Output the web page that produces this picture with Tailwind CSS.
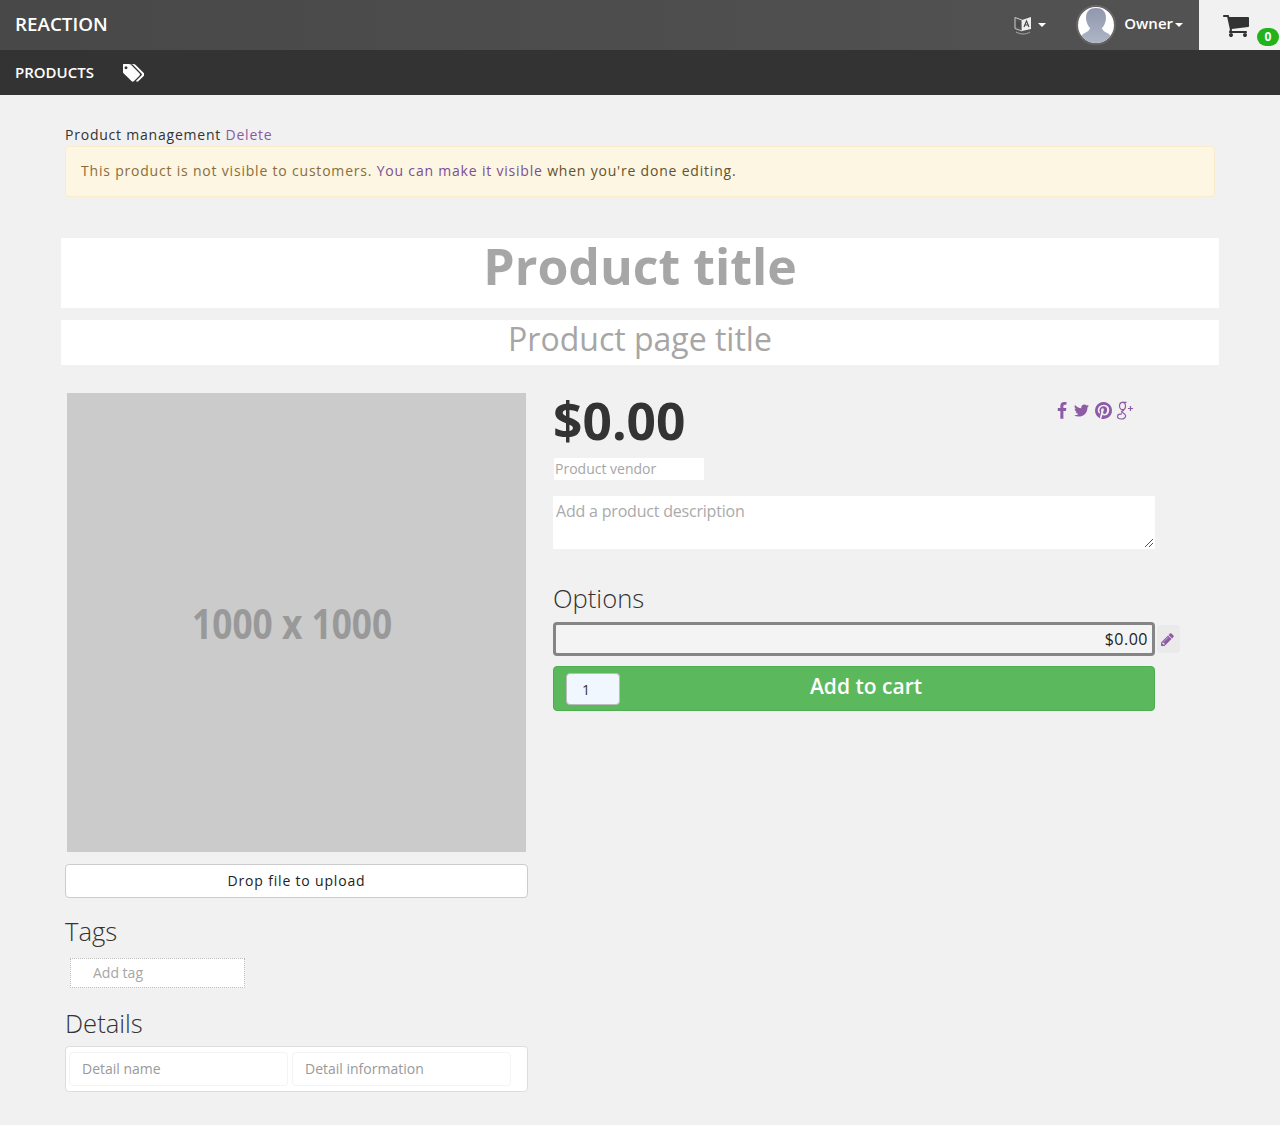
<!DOCTYPE html>
<html>
<head>
<meta charset="utf-8">
<script src="https://cdn.jsdelivr.net/npm/@tailwindcss/browser@4"></script>
</head>
<body class="bg-[#f1f1f1] font-['Open_Sans',sans-serif] text-[#333] h-[1125px] overflow-hidden">
<!-- top bar -->
<header class="h-[50px] flex items-center bg-gradient-to-r from-[#484848] to-[#535353] text-white">
  <div class="pl-[15px] pb-[2px] text-[18.800px] font-semibold leading-none">REACTION</div>
  <div class="ml-auto flex items-center h-full">
    <svg class="w-[18px] h-[20px] mr-[6px]" viewBox="0 0 18 20"><path d="M1 2.500l7 2.500v11l-7-2.500z" fill="none" stroke="#ccc"/><path d="M8 5l9-3v12l-9 2z" fill="#eee"/><path d="M2 17c3 1.500 5 2 7 2s5-.5 7-2" fill="none" stroke="#aaa"/><path d="M3 7l3 5M6 7l-3 4M10 12l2.500-6 2.500 6M11 10h3" fill="none" stroke="#444" stroke-width="1.100"/></svg>
    <span class="w-0 h-0 border-x-[4px] border-x-transparent border-t-[4px] border-t-white"></span>
    <div class="ml-[30px] w-[40px] h-[40px] rounded-full border-[2px] border-[#666] bg-white overflow-hidden">
      <svg viewBox="0 0 36 36" class="w-full h-full"><defs><linearGradient id="sil" x1="0" y1="0" x2="0" y2="1"><stop offset="0" stop-color="#8f98ae"/><stop offset="1" stop-color="#aeb5c6"/></linearGradient></defs><path d="M18 1c6 0 10 3 10 10 0 4-2 8-4 10 0 2 3 4 5 5 3 1 4 3 5 10H2c1-7 2-9 5-10 2-1 5-3 5-5-2-2-4-6-4-10C8 4 12 1 18 1z" fill="url(#sil)"/></svg>
    </div>
    <div class="ml-[8px] pb-[3px] text-[15px] font-semibold">Owner</div>
    <span class="ml-[2px] w-0 h-0 border-x-[4px] border-x-transparent border-t-[4px] border-t-white"></span>
    <div class="relative ml-[16px] w-[81px] h-full bg-[#f1f1f1]">
      <svg class="absolute left-[23px] top-[13px] w-[28px] h-[24px]" viewBox="0 128 1792 1536" preserveAspectRatio="none"><path fill="#333" d="M704 1536q0 52-38 90t-90 38-90-38-38-90 38-90 90-38 90 38 38 90zm896 0q0 52-38 90t-90 38-90-38-38-90 38-90 90-38 90 38 38 90zm128-1088v512q0 24-16.500 42.500t-40.500 21.500l-1044 122q13 60 13 70 0 16-24 64h920q26 0 45 19t19 45-19 45-45 19h-1024q-26 0-45-19t-19-45q0-11 8-31.500t16-36 21.500-40 15.500-29.500l-177-823h-204q-26 0-45-19t-19-45 19-45 45-19h256q16 0 28.500 6.500t19.500 15.500 13 24.500 8 26 5.500 29.500 4.500 26h1201q26 0 45 19t19 45z"/></svg>
      <span class="absolute left-[58px] top-[28px] w-[22px] h-[18px] rounded-full bg-[#22b21a] text-white text-[12px] font-bold leading-[18px] text-center">0</span>
    </div>
  </div>
</header>
<!-- sub nav -->
<nav class="h-[45px] bg-[#333] flex items-center text-white pl-[15px]">
  <span class="text-[15px] font-semibold">PRODUCTS</span>
  <svg class="ml-[29px] w-[21px] h-[18px]" viewBox="0 128 1792 1536"><path fill="#fff" d="M384 448q0-53-37.500-90.500t-90.500-37.500-90.500 37.500-37.500 90.500 37.500 90.500 90.500 37.500 90.500-37.500 37.500-90.500zm1067 576q0 53-37 90l-491 492q-39 37-91 37-53 0-90-37l-715-716q-38-37-64.500-101t-26.500-117v-416q0-52 38-90t90-38h416q53 0 117 26.500t102 64.500l715 714q37 39 37 91zm384 0q0 53-37 90l-491 492q-39 37-91 37-36 0-59-14t-53-45l470-470q37-37 37-90 0-52-37-91l-715-714q-38-38-102-64.500t-117-26.500h224q53 0 117 26.500t102 64.500l715 714q37 39 37 91z"/></svg>
</nav>
<main class="px-[61px]">
  <div class="px-[4px] pt-[30px] text-[14px] tracking-[0.78px] leading-[20px]">
    Product management <a class="text-[#8a5a9e]">Delete</a>
  </div>
  <div class="mx-[4px] mt-px h-[51px] px-[15px] pb-[2px] flex items-center rounded-[4px] border border-[#faebcc] bg-[#fcf6e2] text-[#8a6d3b] text-[14px] tracking-[0.8px]">
    <span>This product is not visible to customers. <a class="text-[#7d4e96]">You can make it visible</a> <span class="text-[#66512c]">when you're done editing.</span></span>
  </div>
  <h1 class="mt-[41px] h-[70px] bg-white text-center text-[50px] font-bold text-[#a6a6a6] leading-[56px]">Product title</h1>
  <h2 class="mt-[12px] h-[45px] bg-white text-center text-[32px] text-[#a6a6a6] leading-[38px]">Product page title</h2>
  <div class="mt-[28px] flex">
    <!-- left column -->
    <div class="ml-[4px] w-[463px]">
      <div class="ml-[2px] w-[459px] h-[459px] bg-[#cbcbcb] flex items-center justify-center pr-[9px] text-[#999] text-[42px] font-bold">
        <span class="scale-x-[.84] whitespace-nowrap">1000 x 1000</span>
      </div>
      <div class="mt-[12px] h-[34px] pb-[2px] bg-white border border-[#ccc] rounded-[4px] flex items-center justify-center text-[14px] tracking-[0.82px] text-[#222]">Drop file to upload</div>
      <h3 class="mt-[17px] text-[25.600px] leading-[33px] font-light">Tags</h3>
      <div class="mt-[10px] ml-[5px] w-[175px] h-[30px] pb-[2px] bg-white border border-dotted border-[#bbb] flex items-center pl-[22px] text-[14px] text-[#a6a6a6]">Add tag</div>
      <h3 class="mt-[19px] text-[25.600px] leading-[33px] font-light">Details</h3>
      <div class="mt-[6px] h-[46px] bg-white border border-[#ddd] rounded-[4px] flex items-center pl-[3px] gap-[4px]">
        <div class="w-[219px] h-[34px] pb-[2px] border border-[#f4f4f4] rounded-[4px] flex items-center pl-[12px] text-[14px] text-[#999]">Detail name</div>
        <div class="w-[219px] h-[34px] pb-[2px] border border-[#f4f4f4] rounded-[4px] flex items-center pl-[12px] text-[14px] text-[#999]">Detail information</div>
      </div>
    </div>
    <!-- right column -->
    <div class="ml-[25px] w-[627px]">
      <div class="flex items-start h-[65px]">
        <div class="text-[51.500px] font-bold leading-[54px]">$0.00</div>
        <div class="ml-auto mr-[46px] mt-[8px] flex items-center gap-[5px] text-[#8e5ba6]">
          <svg class="w-[12px] h-[18px]" viewBox="450 0 900 1792" fill="currentColor"><path d="M1343 12v264h-157q-86 0-116 36t-30 108v189h293l-39 296h-254v759h-306v-759h-255v-296h255v-218q0-186 104-288.500t277-102.500q147 0 228 12z"/></svg>
          <svg class="w-[17px] h-[17px]" viewBox="0 0 1792 1792" fill="currentColor"><path d="M1684 408q-67 98-162 167 1 14 1 42 0 130-38 259.500t-115.500 248.500-184.500 210.500-258 146-323 54.500q-271 0-496-145 35 4 76 4 225 0 401-138-105-2-188-64.500t-114-159.500q33 5 61 5 43 0 85-11-112-23-185.500-111.500t-73.500-205.500v-4q68 38 146 41-66-44-105-115t-39-154q0-88 44-163 121 149 294.500 238.500t371.500 99.500q-8-38-8-74 0-134 94.500-228.500t228.500-94.500q140 0 236 102 109-21 205-78-37 115-142 178 93-10 186-50z"/></svg>
          <svg class="w-[17px] h-[17px]" viewBox="128 128 1536 1536" fill="currentColor"><path d="M1664 896q0 209-103 385.500t-279.500 279.500-385.500 103q-111 0-218-32 59-93 78-164 9-34 54-211 20 39 73 67.500t114 28.500q121 0 216-68.500t147-188.500 52-270q0-114-59.500-214t-172.500-163-255-63q-105 0-196 29t-154.500 77-109 110.500-67 129.500-21.500 134q0 104 40 183t117 111q30 12 38-20 2-7 8-31t8-30q6-23-11-43-51-61-51-151 0-151 104.500-259.500t273.500-108.500q151 0 235.500 82t84.500 213q0 170-68.500 289t-175.500 119q-61 0-98-43.500t-23-104.500q8-35 26.500-93.500t30-103 11.500-75.500q0-50-27-83t-77-33q-62 0-105 57t-43 142q0 73 25 122l-99 418q-17 70-13 177-206-91-333-281t-127-423q0-209 103-385.500t279.500-279.500 385.500-103 385.500 103 279.500 279.500 103 385.500z"/></svg>
          <svg class="w-[17px] h-[19px]" viewBox="0 0 17 19" fill="none" stroke="currentColor" stroke-width="1.200"><ellipse cx="5.500" cy="5" rx="3" ry="3.700"/><path d="M5 1.300h4.500M7 9c-1 1-2 .8-2.500 1.500-.5.700 3.500 2 4 3.800.5 2.200-1.500 3.700-4 3.700-2.700 0-4-1.200-4-2.500 0-1.800 2-2.600 4.500-2.600"/><path d="M11 7.500h5M13.500 5v5"/></svg>
        </div>
      </div>
      <div class="ml-[1px] w-[150px] h-[22px] pb-[2px] bg-white flex items-center pl-px text-[14px] font-medium text-[#a6a6a6]">Product vendor</div>
      <div class="relative mt-[16px] w-[602px] h-[53px] bg-white border border-dotted border-white px-[2px] pt-[2px] text-[16px] tracking-[-0.2px] leading-[24px] text-[#aaa]">Add a product description
        <svg class="absolute right-[1px] bottom-[1px] w-[8px] h-[8px]" viewBox="0 0 8 8" stroke="#555" fill="none"><path d="M0 8L8 0M4 8l4-4"/></svg>
      </div>
      <h3 class="mt-[33px] text-[25.600px] leading-[33px] font-light">Options</h3>
      <div class="mt-[7px] flex items-center">
        <div class="w-[602px] h-[34px] border-[3px] border-[#858585] rounded-[4px] bg-[#f4f4f4] flex items-center justify-end pr-[4px] text-[16px] tracking-[0.5px] text-[#222]">$0.00</div>
        <div class="ml-[2px] w-[23px] h-[28px] rounded-[4px] bg-[#eaeaea] flex items-center justify-center pr-[2px]">
          <svg class="w-[15px] h-[15px]" viewBox="0 0 1792 1792" fill="#8e5ba6"><path d="M491 1536l91-91-235-235-91 91v107h128v128h107zm523-928q0-22-22-22-10 0-17 7l-542 542q-7 7-7 17 0 22 22 22 10 0 17-7l542-542q7-7 7-17zm-54-192l416 416-832 832h-416v-416zm683 96q0 53-37 90l-166 166-416-416 166-165q36-38 90-38 53 0 91 38l235 234q37 39 37 91z"/></svg>
        </div>
      </div>
      <div class="mt-[10px] w-[602px] h-[45px] rounded-[4px] bg-[#5cb85c] border border-[#4cae4c] flex items-center pl-[12px]">
        <div class="w-[54px] h-[32px] pt-px bg-[#f0f7ff] border border-[#bbb] rounded-[4px] flex items-center pl-[15px] text-[14px] text-[#333]">1</div>
        <div class="flex-1 text-center pr-[42px] pb-[3px] text-white text-[21px] font-semibold">Add to cart</div>
      </div>
    </div>
  </div>
</main>
</body>
</html>
